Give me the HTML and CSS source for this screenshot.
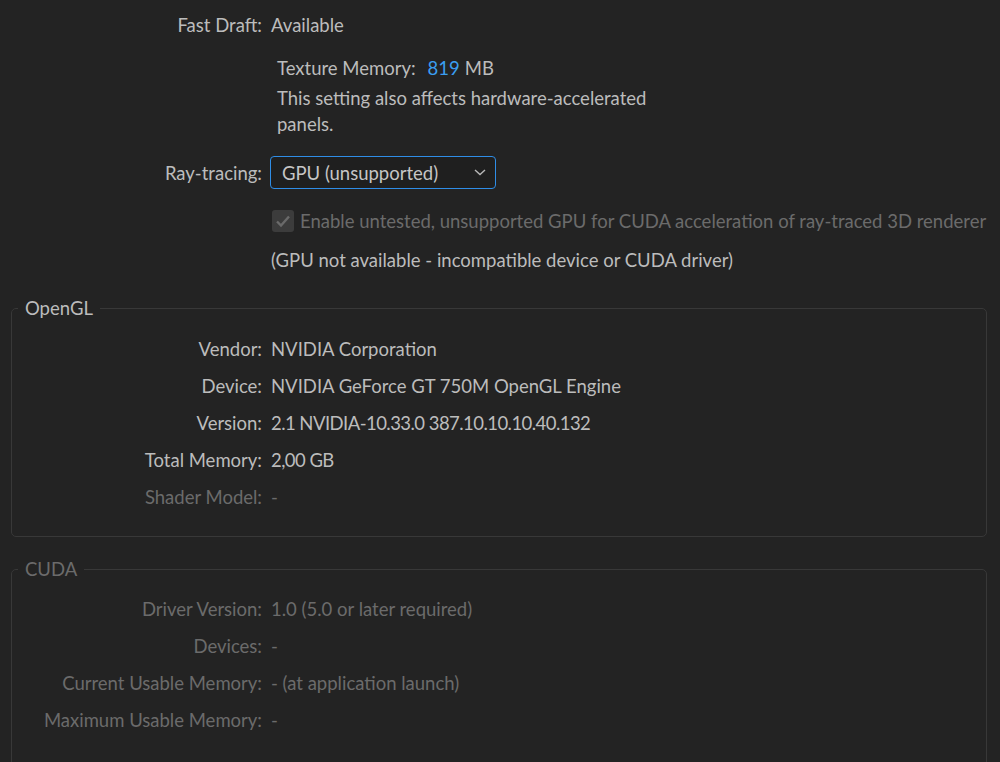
FILE: index.html
```html
<!DOCTYPE html>
<html lang="en">
<head>
<meta charset="utf-8">
<title>GPU Information</title>
<link rel="stylesheet" href="styles.css">
</head>
<body>
<div class="page">
  <div class="top">
    <div class="row first">
      <span class="label">Fast Draft:</span>
      <span class="value">Available</span>
    </div>
    <div class="sub">
      <div class="texture">Texture Memory:<span class="num">819</span>MB</div>
      <div class="desc">This setting also affects hardware-accelerated<br>panels.</div>
    </div>
    <div class="row ray">
      <span class="label">Ray-tracing:</span>
      <div class="select">
        <span>GPU (unsupported)</span>
        <svg class="chev" width="12" height="7" viewBox="0 0 12 7"><path d="M1 1 L6 5.5 L11 1" fill="none" stroke="#b8b8b8" stroke-width="1.4"/></svg>
      </div>
    </div>
    <div class="row check">
      <span class="label"></span>
      <div class="checkline">
        <span class="box"><svg width="16" height="14" viewBox="0 0 16 14"><path d="M2 7.5 L6 11.5 L14 2.5" fill="none" stroke="#6a6a6a" stroke-width="2.4"/></svg></span>
        <span class="dim">Enable untested, unsupported GPU for CUDA acceleration of ray-traced 3D renderer</span>
      </div>
    </div>
    <div class="row note">
      <span class="label"></span>
      <span class="value">(GPU not available - incompatible device or CUDA driver)</span>
    </div>
  </div>

  <fieldset class="group opengl">
    <legend>OpenGL</legend>
    <div class="row"><span class="label">Vendor:</span><span class="value">NVIDIA Corporation</span></div>
    <div class="row"><span class="label">Device:</span><span class="value">NVIDIA GeForce GT 750M OpenGL Engine</span></div>
    <div class="row"><span class="label">Version:</span><span class="value tight">2.1 NVIDIA-10.33.0 387.10.10.10.40.132</span></div>
    <div class="row"><span class="label">Total Memory:</span><span class="value tight">2,00 GB</span></div>
    <div class="row disabled"><span class="label">Shader Model:</span><span class="value">-</span></div>
  </fieldset>

  <fieldset class="group cuda disabled">
    <legend>CUDA</legend>
    <div class="row"><span class="label">Driver Version:</span><span class="value">1.0 (5.0 or later required)</span></div>
    <div class="row"><span class="label">Devices:</span><span class="value">-</span></div>
    <div class="row"><span class="label">Current Usable Memory:</span><span class="value">- (at application launch)</span></div>
    <div class="row"><span class="label">Maximum Usable Memory:</span><span class="value">-</span></div>
  </fieldset>
</div>
</body>
</html>
```

FILE: styles.css
```css
html, body {
  margin: 0;
  padding: 0;
  background: #232323;
}
body {
  font-family: "Lato", "Open Sans", sans-serif;
  font-size: 18.5px;
  color: #bcbcbc;
  width: 1000px;
  height: 762px;
  overflow: hidden;
}
.page {
  padding-top: 6px;
}
.row {
  display: grid;
  grid-template-columns: 262px 1fr;
  column-gap: 9px;
  align-items: center;
  height: 37px;
}
.label {
  text-align: right;
  white-space: nowrap;
}
.value {
  white-space: nowrap;
}
.value.tight {
  letter-spacing: -0.55px;
}
.sub {
  margin-left: 277px;
  margin-top: 12px;
  line-height: 26px;
}
.texture .num {
  color: #3a9ef0;
  margin: 0 5px 0 12px;
}
.desc {
  margin-top: 4px;
}
.row.ray {
  margin-top: 19px;
  height: 33px;
}
.select {
  box-sizing: border-box;
  width: 226px;
  height: 33px;
  margin-left: -1px;
  border: 1.5px solid #2f8de6;
  border-radius: 4px;
  background: #1f1f1f;
  display: flex;
  align-items: center;
  justify-content: space-between;
  padding: 0 9px 0 11px;
  color: #c6c6c6;
}
.chev {
  display: block;
}
.row.check {
  margin-top: 19px;
  height: 26px;
}
.checkline {
  display: flex;
  align-items: center;
  gap: 6px;
  white-space: nowrap;
}
.box {
  width: 22px;
  height: 22px;
  margin-left: 1px;
  border-radius: 3px;
  background: #3c3c3c;
  display: flex;
  align-items: center;
  justify-content: center;
}
.dim, .disabled, .disabled .label, .disabled .value, .disabled legend {
  color: #6b6b6b;
}
.row.note {
  margin-top: 13px;
  height: 26px;
}
.group {
  margin: 0 13px 0 11px;
  padding: 0;
  border: 1px solid #383838;
  border-radius: 5px;
}
.group .row {
  grid-template-columns: 250px 1fr;
}
.group legend {
  margin-left: 6px;
  padding: 0 7px;
  line-height: 24px;
}
.opengl {
  margin-top: 23px;
  padding-top: 10px;
  padding-bottom: 21px;
}
.cuda {
  margin-top: 20px;
  padding-top: 9px;
  padding-bottom: 30px;
}
```
